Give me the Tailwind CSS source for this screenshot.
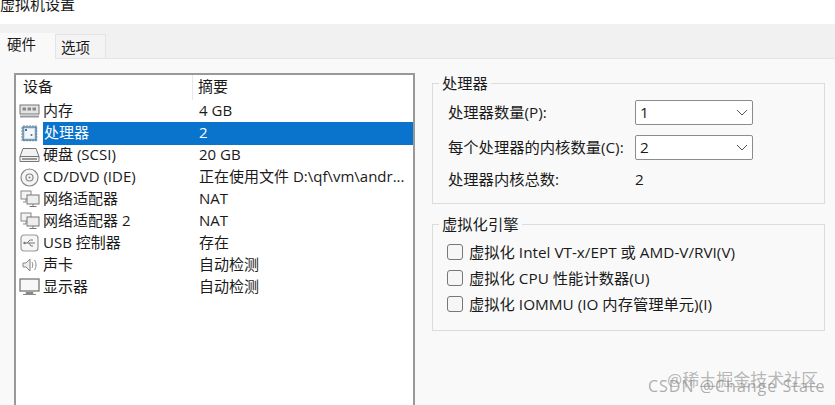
<!DOCTYPE html>
<html lang="zh-CN">
<head>
<meta charset="UTF-8">
<title>虚拟机设置</title>
<script src="https://cdn.jsdelivr.net/npm/@tailwindcss/browser@4"></script>
</head>
<body class="bg-[#f9f9f9] text-[#1a1a1a] overflow-hidden font-['Open_Sans','Noto_Sans_CJK_SC',sans-serif] text-[15px]">
<div class="relative w-[835px] h-[405px] overflow-hidden">
  <!-- title bar -->
  <div class="h-[24px] bg-white overflow-hidden">
    <div class="text-[15px] leading-[20px] -mt-[6px]">虚拟机设置</div>
  </div>
  <!-- tabs -->
  <div class="h-[35px] bg-[#f1f1f1] flex items-end border-b border-[#e4e4e4]">
    <div class="w-[55px] h-[26px] bg-[#f9f9f9] -mb-px pl-[7px] leading-[24px] text-[14.5px]">硬件</div>
    <div class="w-[51px] h-[24px] bg-[#f4f4f4] border border-b-0 border-[#e4e4e4] pl-[5px] leading-[25px] text-[14.5px]">选项</div>
  </div>
  <!-- body -->
  <div class="flex pl-[14px] pt-[14px] items-start">
    <!-- device list -->
    <div class="w-[401px] h-[340px] bg-white border-2 border-b-0 border-[#999999] shrink-0">
      <div class="flex h-[25px] items-center">
        <div class="w-[177px] pl-[7px] h-full border-r border-[#e8e8e8] leading-[23px]">设备</div>
        <div class="pl-[5px] h-full leading-[23px]">摘要</div>
      </div>
      <div class="flex flex-col">
        <div class="flex h-[22px] items-center">
          <div class="w-[27px] flex justify-center shrink-0">
            <svg width="21" height="16" viewBox="0 0 21 16" fill="none"><rect x="1" y="2" width="19" height="9" fill="#e4e4e4" stroke="#777"/><rect x="3.500" y="4.500" width="3.500" height="3" fill="#888"/><rect x="8.500" y="4.500" width="3.500" height="3" fill="#888"/><rect x="13.500" y="4.500" width="3.500" height="3" fill="#888"/><path d="M1 13.500H20" stroke="#999" stroke-width="2"/></svg>
          </div>
          <div class="w-[151px] -mt-[2px]">内存</div>
          <div class="pl-[5px] -mt-[2px]">4 GB</div>
        </div>
        <div class="flex h-[22px] items-center">
          <div class="w-[27px] flex justify-center shrink-0">
            <svg width="19" height="19" viewBox="0 0 19 19" fill="none"><path d="M4 1v17M7 1v17M10 1v17M13 1v17M16 1v17M1 4h17M1 7h17M1 10h17M1 13h17M1 16h17" stroke="#6f93b0" stroke-dasharray="1.500 1.500"/><rect x="3" y="3" width="13" height="13" fill="#cfe0ec" stroke="#46708f" stroke-width="1.200"/><rect x="5" y="5" width="9" height="9" fill="#f3f7fa"/><circle cx="11.500" cy="11" r="1" fill="#46708f"/><rect x="5" y="5" width="2" height="2" fill="#46708f"/></svg>
          </div>
          <div class="flex-1 flex h-[23px] bg-[#0a73cc] text-white items-center">
            <div class="w-[151px] pl-px -mt-[2px]">处理器</div>
            <div class="pl-[5px] -mt-[2px]">2</div>
          </div>
        </div>
        <div class="flex h-[22px] items-center">
          <div class="w-[27px] flex justify-center shrink-0">
            <svg width="21" height="16" viewBox="0 0 21 16" fill="none"><path d="M4 1.500h13l3 8v5H1v-5z" fill="#f2f2f2" stroke="#777"/><path d="M1 9.500h19" stroke="#777"/><rect x="3" y="11" width="15" height="2" fill="#999"/></svg>
          </div>
          <div class="w-[151px] -mt-[2px]">硬盘 (SCSI)</div>
          <div class="pl-[5px] -mt-[2px]">20 GB</div>
        </div>
        <div class="flex h-[22px] items-center">
          <div class="w-[27px] flex justify-center shrink-0">
            <svg width="19" height="19" viewBox="0 0 19 19" fill="none"><circle cx="9.500" cy="9.500" r="8.500" fill="#f5f5f5" stroke="#888" stroke-width="1.200"/><circle cx="9.500" cy="9.500" r="3.500" stroke="#888" stroke-width="1.200"/><circle cx="9.500" cy="9.500" r="1" fill="#888"/></svg>
          </div>
          <div class="w-[151px] -mt-[2px]">CD/DVD (IDE)</div>
          <div class="pl-[5px] -mt-[2px] whitespace-nowrap">正在使用文件 D:\qf\vm\andr...</div>
        </div>
        <div class="flex h-[22px] items-center">
          <div class="w-[27px] flex justify-center shrink-0">
            <svg width="20" height="18" viewBox="0 0 20 18" fill="none"><rect x="1" y="1" width="10" height="8" fill="#f3f3f3" stroke="#888"/><path d="M6 9v3H3" stroke="#888"/><rect x="7" y="5" width="12" height="9" fill="#eee" stroke="#777"/><path d="M13 14v2M9.500 16.500h7" stroke="#777"/></svg>
          </div>
          <div class="w-[151px] -mt-[2px]">网络适配器</div>
          <div class="pl-[5px] -mt-[2px]">NAT</div>
        </div>
        <div class="flex h-[22px] items-center">
          <div class="w-[27px] flex justify-center shrink-0">
            <svg width="20" height="18" viewBox="0 0 20 18" fill="none"><rect x="1" y="1" width="10" height="8" fill="#f3f3f3" stroke="#888"/><path d="M6 9v3H3" stroke="#888"/><rect x="7" y="5" width="12" height="9" fill="#eee" stroke="#777"/><path d="M13 14v2M9.500 16.500h7" stroke="#777"/></svg>
          </div>
          <div class="w-[151px] -mt-[2px]">网络适配器 2</div>
          <div class="pl-[5px] -mt-[2px]">NAT</div>
        </div>
        <div class="flex h-[22px] items-center">
          <div class="w-[27px] flex justify-center shrink-0">
            <svg width="19" height="18" viewBox="0 0 19 18" fill="none"><rect x="1" y="1" width="17" height="16" rx="3" fill="#f6f6f6" stroke="#999" stroke-width="1.200"/><path d="M4 9h11M7 9l3-3h3M9 9l2 3h2" stroke="#777"/><circle cx="4.500" cy="9" r="1.200" fill="#777"/></svg>
          </div>
          <div class="w-[151px] -mt-[2px]">USB 控制器</div>
          <div class="pl-[5px] -mt-[2px]">存在</div>
        </div>
        <div class="flex h-[22px] items-center">
          <div class="w-[27px] flex justify-center shrink-0">
            <svg width="16" height="16" viewBox="0 0 16 16" fill="none"><path d="M1 6h3l4-4v12l-4-4H1z" fill="#eee" stroke="#888"/><path d="M10 5c1 2 1 4 0 6M12.500 3c2 3 2 7 0 10" stroke="#888"/></svg>
          </div>
          <div class="w-[151px] -mt-[2px]">声卡</div>
          <div class="pl-[5px] -mt-[2px]">自动检测</div>
        </div>
        <div class="flex h-[22px] items-center">
          <div class="w-[27px] flex justify-center shrink-0">
            <svg width="21" height="18" viewBox="0 0 21 18" fill="none"><rect x="1" y="1" width="19" height="12" fill="#f7f7f7" stroke="#777" stroke-width="1.300"/><path d="M7 14.500h7v1H7z" fill="#888" stroke="#888"/><path d="M4 16.500h13" stroke="#888"/></svg>
          </div>
          <div class="w-[151px] -mt-[2px]">显示器</div>
          <div class="pl-[5px] -mt-[2px]">自动检测</div>
        </div>
      </div>
    </div>
    <!-- right panels -->
    <div class="ml-[17px] w-[393px] flex flex-col gap-[10px] text-[15.3px]">
      <fieldset class="border border-[#dcdcdc] h-[131px] pl-[15px]">
        <legend class="ml-[-9px] px-[3px] leading-[20px]">处理器</legend>
        <div class="flex items-center h-[25px] mt-[7px]">
          <div class="w-[187px]">处理器数量(P):</div>
          <div class="w-[118px] h-[25px] bg-white border border-[#8c8c8c] rounded-[2px] flex items-center justify-between pl-[4px] pr-[4px]">
            <span>1</span>
            <svg width="12" height="7" viewBox="0 0 12 7" fill="none"><path d="M1 1l5 5 5-5" stroke="#555"/></svg>
          </div>
        </div>
        <div class="flex items-center h-[25px] mt-[10px]">
          <div class="w-[187px] whitespace-nowrap">每个处理器的内核数量(C):</div>
          <div class="w-[118px] h-[25px] bg-white border border-[#8c8c8c] rounded-[2px] flex items-center justify-between pl-[4px] pr-[4px]">
            <span>2</span>
            <svg width="12" height="7" viewBox="0 0 12 7" fill="none"><path d="M1 1l5 5 5-5" stroke="#555"/></svg>
          </div>
        </div>
        <div class="flex items-center h-[22px] mt-[8px]">
          <div class="w-[187px]">处理器内核总数:</div>
          <div>2</div>
        </div>
      </fieldset>
      <fieldset class="border border-[#dcdcdc] h-[117px] pl-[15px]">
        <legend class="ml-[-9px] px-[3px] leading-[20px]">虚拟化引擎</legend>
        <div class="flex flex-col gap-[4px] mt-[7px]">
          <div class="flex items-center h-[22px] gap-[6px]">
            <div class="w-[16px] h-[16px] -ml-px border border-[#777] rounded-[3px] bg-[#f6f6f6]"></div>
            <span>虚拟化 Intel VT-x/EPT 或 AMD-V/RVI(V)</span>
          </div>
          <div class="flex items-center h-[22px] gap-[6px]">
            <div class="w-[16px] h-[16px] -ml-px border border-[#777] rounded-[3px] bg-[#f6f6f6]"></div>
            <span>虚拟化 CPU 性能计数器(U)</span>
          </div>
          <div class="flex items-center h-[22px] gap-[6px]">
            <div class="w-[16px] h-[16px] -ml-px border border-[#777] rounded-[3px] bg-[#f6f6f6]"></div>
            <span>虚拟化 IOMMU (IO 内存管理单元)(I)</span>
          </div>
        </div>
      </fieldset>
    </div>
  </div>
  <!-- watermarks -->
  <div class="absolute left-[667px] top-[369px] text-[17px] leading-[22px] text-[#8a8a8a]/60 whitespace-nowrap">@稀土掘金技术社区</div>
  <div class="absolute left-[648px] top-[375px] text-[16px] leading-[22px] tracking-[1px] text-[#8a8a8a]/70 whitespace-nowrap">CSDN @Change State</div>
</div>
</body>
</html>
